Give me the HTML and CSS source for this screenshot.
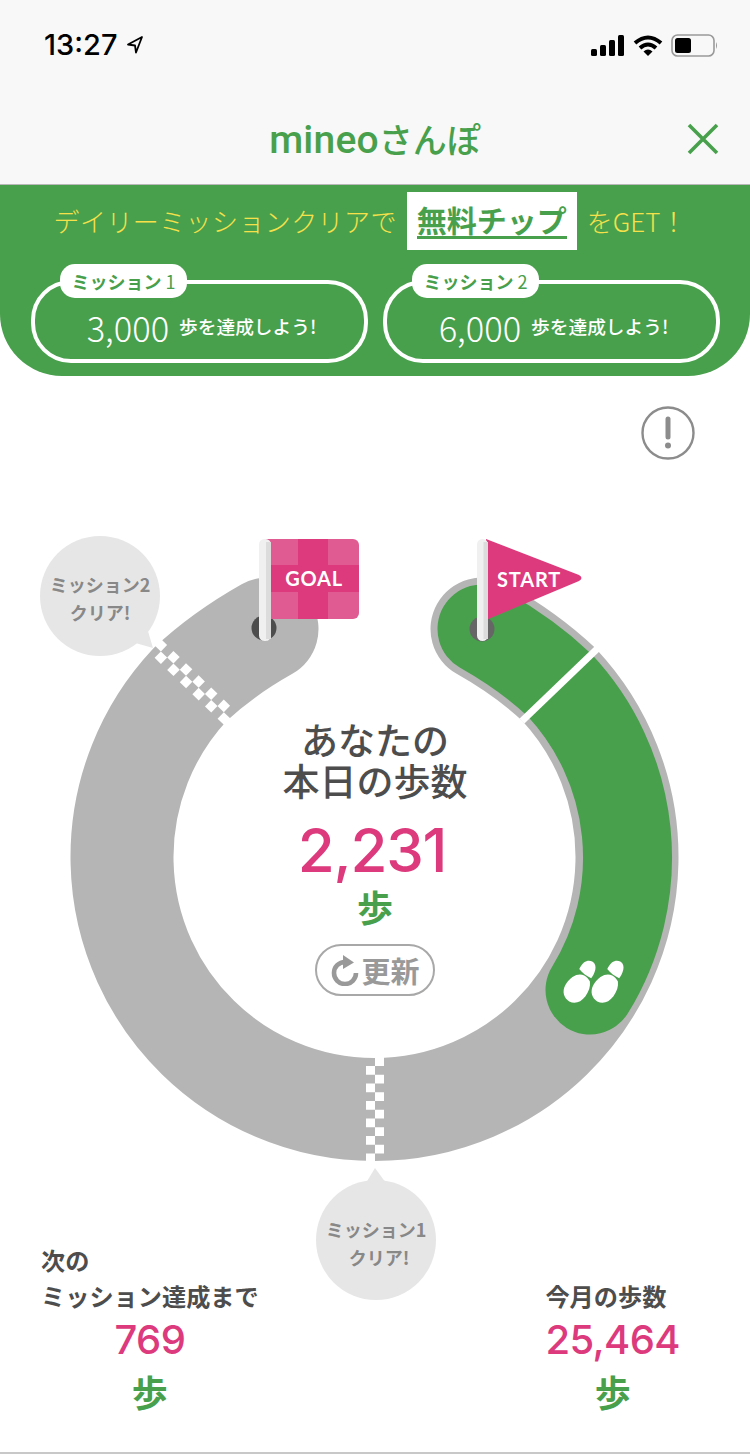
FILE: index.html
```html
<!DOCTYPE html>
<html lang="ja">
<head>
<meta charset="utf-8">
<title>mineoさんぽ</title>
<link rel="stylesheet" href="styles.css">
</head>
<body>
<div class="page">
  <header class="top">
    <div class="status">
      <div class="status-time">
        <span class="time">13:27</span>
        <svg class="arrow" width="18" height="20" viewBox="0 0 18 20"><path d="M16 2 L2 9.5 L9 10.5 L10 17.5 Z" fill="none" stroke="#000" stroke-width="1.8" stroke-linejoin="round"/></svg>
      </div>
      <div class="status-icons">
        <svg width="34" height="22" viewBox="0 0 34 22"><rect x="0" y="14" width="6" height="7" rx="1.5"/><rect x="9" y="10" width="6" height="11" rx="1.5"/><rect x="18" y="5" width="6" height="16" rx="1.5"/><rect x="27" y="0" width="6" height="21" rx="1.5"/></svg>
        <svg width="30" height="22" viewBox="0 0 30 22"><path d="M2 8 Q15 -3 28 8" fill="none" stroke="#000" stroke-width="4"/><path d="M7 13 Q15 6 23 13" fill="none" stroke="#000" stroke-width="4"/><path d="M10.5 16.5 Q15 12.5 19.5 16.5 L15 21 Z"/></svg>
        <svg width="47" height="23" viewBox="0 0 47 23"><rect x="1" y="1" width="42" height="21" rx="5.5" fill="none" stroke="#999" stroke-width="1.6"/><rect x="4" y="4" width="16" height="15" rx="2.5"/><path d="M45 8 Q47 11.5 45 15 Z" fill="#999"/></svg>
      </div>
    </div>
    <div class="nav">
      <h1 class="title"><span class="title-latin">mineo</span>さんぽ</h1>
      <svg class="close" width="32" height="32" viewBox="0 0 32 32"><path d="M2 2 L30 30 M30 2 L2 30" stroke="#48a04c" stroke-width="3.6" fill="none"/></svg>
    </div>
  </header>

  <section class="banner">
    <div class="headline">
      <span class="headline-lead">デイリーミッションクリアで</span>
      <a class="chip-box"><span class="chip-text">無料チップ</span></a>
      <span>をGET！</span>
    </div>
    <div class="missions">
      <div class="mission">
        <span class="mission-tag">ミッション<span class="tag-num">1</span></span>
        <span class="mission-steps">3,000</span>
        <span class="mission-copy">歩を達成しよう!</span>
      </div>
      <div class="mission">
        <span class="mission-tag">ミッション<span class="tag-num">2</span></span>
        <span class="mission-steps">6,000</span>
        <span class="mission-copy">歩を達成しよう!</span>
      </div>
    </div>
  </section>

  <div class="info-row">
    <svg width="54" height="54" viewBox="0 0 54 54"><circle cx="27" cy="27" r="25.5" fill="#fff" stroke="#8c8c8c" stroke-width="2.4"/><path d="M27 13 V31" stroke="#8c8c8c" stroke-width="5" stroke-linecap="round"/><circle cx="27" cy="39.5" r="3" fill="#8c8c8c"/></svg>
  </div>

  <main class="course">
    <svg class="course-map" width="750" height="850" viewBox="0 460 750 850">
      <defs>
        <g id="checker" fill="#fff">
          <rect x="375" y="1055" width="9" height="11"/>
          <rect x="366" y="1066" width="9" height="8.75"/>
          <rect x="375" y="1074.75" width="9" height="8.75"/>
          <rect x="366" y="1083.5" width="9" height="8.75"/>
          <rect x="375" y="1092.25" width="9" height="8.75"/>
          <rect x="366" y="1101" width="9" height="8.75"/>
          <rect x="375" y="1109.75" width="9" height="8.75"/>
          <rect x="366" y="1118.5" width="9" height="8.75"/>
          <rect x="375" y="1127.25" width="9" height="8.75"/>
          <rect x="366" y="1136" width="9" height="8.75"/>
          <rect x="375" y="1144.75" width="9" height="8.75"/>
          <rect x="366" y="1153.5" width="9" height="10"/>
        </g>
        <g id="shoe" fill="#fff">
          <path d="M-11.5 3 C-11.5 -8 -6 -14 0 -14.5 C3 -14.500 6 -13.500 8 -12 C11 -8 12 -3 11.500 3 C10.500 11 6 15.500 0 15.500 C-6 15.500 -11.500 11 -11.500 3 Z"/>
          <path d="M-7.500 -17.500 C-8.500 -27 -4 -30.500 0 -30.500 C4.500 -30.500 8.500 -26 7.500 -15.500 C3 -15 -3 -15.500 -7.500 -17.500 Z"/>
        </g>
      </defs>

      <path class="track" d="M482 629 C505 642 535 662 559.2 684.8 A252.5 252.5 0 1 1 189.8 684.8 C214 662 244 642 267 629"/>
      <path class="track-done" d="M482 629 C505 642 535 662 559.2 684.8 A252.5 252.5 0 0 1 590 990"/>
      <path class="divider" d="M597 649 L522 721"/>
      <use href="#checker"/>
      <use href="#checker" transform="rotate(134 374.5 857)"/>

      <g transform="translate(577 988) rotate(30)"><use href="#shoe"/></g>
      <g transform="translate(605 988) rotate(30)"><use href="#shoe"/></g>

      <circle cx="264" cy="628" r="12.5" fill="#4d4d4d"/>
      <circle cx="482" cy="629" r="12.5" fill="#666"/>

      <rect x="262" y="539" width="97" height="80" rx="6" fill="#e05b92"/>
      <rect x="298" y="539" width="30" height="80" fill="#dc3a7c"/>
      <rect x="271" y="565" width="88" height="27" fill="#dc3a7c"/>
      <text class="flag-label" x="314" y="586">GOAL</text>
      <rect x="259" y="539" width="12" height="102" rx="5.5" fill="#f0f0f0"/>
      <rect x="266" y="542" width="5" height="97" fill="#dcdcdc"/>

      <path d="M486 539 L579 575 Q584 578 579 581 L486 620 Z" fill="#dc3a7c"/>
      <text class="flag-label" x="529" y="587">START</text>
      <rect x="477" y="539" width="11" height="102" rx="5.5" fill="#f0f0f0"/>
      <rect x="483.500" y="542" width="4.500" height="97" fill="#dcdcdc"/>

      <circle cx="100" cy="596" r="60" fill="#e6e6e6"/>
      <path d="M147 628 L153 648 L132 642 Z" fill="#e6e6e6"/>
      <text class="bubble-label" x="100" y="592">ミッション2</text>
      <text class="bubble-label" x="100" y="620">クリア!</text>

      <circle cx="376" cy="1240" r="60" fill="#e6e6e6"/>
      <path d="M375 1168 L366 1183 L386 1183 Z" fill="#e6e6e6"/>
      <text class="bubble-label" x="376" y="1237">ミッション1</text>
      <text class="bubble-label" x="379" y="1265">クリア!</text>
    </svg>

    <div class="today">
      <h2 class="today-title">あなたの<br>本日の歩数</h2>
      <div class="today-count">2,231</div>
      <div class="today-unit">歩</div>
      <button class="refresh" type="button">
        <svg width="30" height="32" viewBox="0 0 30 32"><path d="M15 8 A11 11 0 1 0 26 19" fill="none" stroke="#999" stroke-width="4.600"/><path d="M13 1 L24 8.500 L13 15 Z" fill="#999"/></svg>
        <span>更新</span>
      </button>
    </div>
  </main>

  <footer class="stats">
    <div class="stat">
      <div class="stat-label">次の<br>ミッション達成まで</div>
      <div class="stat-value">769</div>
      <div class="stat-unit">歩</div>
    </div>
    <div class="stat">
      <div class="stat-label">今月の歩数</div>
      <div class="stat-value">25,464</div>
      <div class="stat-unit">歩</div>
    </div>
  </footer>
</div>
</body>
</html>
```

FILE: styles.css
```css
* { box-sizing: border-box; }
html, body { margin: 0; padding: 0; background: #fff; }
body { font-family: "Noto Sans CJK JP", "Liberation Sans", sans-serif; }
.page { width: 750px; height: 1454px; overflow: hidden; display: flex; flex-direction: column; border-bottom: 2px solid #c8c8c8; }

.top { height: 185px; background: #f8f8f8; border-bottom: 1px solid #b8b8b8; flex: none; }
.status { height: 90px; padding: 30px 32px 0 44px; display: flex; justify-content: space-between; align-items: flex-start; }
.status-time { display: flex; align-items: center; gap: 9px; }
.time { font-family: Inter, Roboto, sans-serif; font-size: 29px; font-weight: 500; line-height: 30px; color: #000; }
.status-icons { display: flex; gap: 8px; align-items: center; padding-top: 4px; }

.nav { height: 94px; display: flex; align-items: center; justify-content: center; position: relative; padding-top: 4px; }
.title { margin: 0; font-size: 34px; font-weight: 500; color: #48a04c; line-height: 44px; }
.title-latin { font-family: Roboto, "Liberation Sans", sans-serif; font-size: 39px; font-weight: 500; letter-spacing: 0.2px; }
.close { position: absolute; right: 31px; top: 33px; }

.banner { height: 191px; flex: none; background: #48a04c; border-radius: 0 0 62px 62px; padding: 7px 30px 0 31px; }
.headline { height: 58px; display: flex; justify-content: center; align-items: center; gap: 10px; color: #f6e14a; font-size: 26px; line-height: 30px; font-weight: 300; padding-right: 11px; }
.headline-lead { letter-spacing: 0.4px; }
.chip-box { background: #fff; height: 58px; width: 170px; display: flex; align-items: center; justify-content: center; }
.chip-text { color: #48a04c; font-weight: 700; font-size: 30px; line-height: 38px; border-bottom: 3px solid #48a04c; display: block; height: 39px; margin-top: -3px; }
.missions { display: grid; grid-template-columns: 337px 337px; column-gap: 15px; margin-top: 30px; }
.mission { position: relative; height: 83px; border: 4px solid #fff; border-radius: 40px; color: #fff; display: flex; align-items: center; justify-content: center; gap: 10px; padding: 11px 0 0 4px; }
.mission-tag { position: absolute; left: 25px; top: -20px; width: 127px; height: 34px; border-radius: 15px; background: #fff; color: #48a04c; font-size: 18px; font-weight: 700; line-height: 34px; text-align: center; white-space: nowrap; }
.tag-num { font-weight: 400; margin-left: 4px; }
.mission-steps { font-family: "Noto Sans CJK JP", sans-serif; font-size: 34.500px; font-weight: 300; line-height: 40px; }
.mission-copy { font-size: 18.700px; font-weight: 500; line-height: 24px; margin-top: -3px; }

.info-row { height: 84px; flex: none; display: flex; justify-content: flex-end; align-items: flex-start; padding: 30px 55px 0 0; }

.course { position: relative; height: 782px; flex: none; }
.course-map { position: absolute; left: 0; top: 0; overflow: visible; }
.track { fill: none; stroke: #b5b5b5; stroke-width: 103; stroke-linecap: round; }
.track-done { fill: none; stroke: #48a04c; stroke-width: 89; stroke-linecap: round; }
.divider { fill: none; stroke: #fff; stroke-width: 7; }
.flag-label { font-family: Lato, "Open Sans", sans-serif; font-weight: 700; font-size: 20px; fill: #fff; text-anchor: middle; letter-spacing: 0.8px; }
.bubble-label { font-family: "Noto Sans CJK JP", sans-serif; font-weight: 700; font-size: 18px; fill: #888; text-anchor: middle; }

.today { position: absolute; left: 175px; width: 400px; top: 259px; display: flex; flex-direction: column; align-items: center; }
.today-title { margin: 0; font-size: 37px; line-height: 41px; font-weight: 500; color: #4d4d4d; text-align: center; }
.today-count { font-family: Inter, "Liberation Sans", sans-serif; font-size: 60px; line-height: 70px; font-weight: 500; color: #dc3a7c; margin-top: 14px; margin-right: 6px; letter-spacing: -1.200px; }
.today-unit { font-size: 36px; line-height: 40px; font-weight: 700; color: #48a04c; margin-top: 1px; }
.refresh { margin-top: 18px; width: 120px; height: 52px; border: 2px solid #a8a8a8; border-radius: 26px; background: #fff; display: flex; align-items: center; justify-content: center; gap: 1px; padding: 0; font-family: inherit; font-size: 29px; font-weight: 700; color: #999; }

.stats { flex: none; display: flex; justify-content: space-between; align-items: flex-end; padding: 0 70px 0 41px; }
.stat { display: flex; flex-direction: column; position: relative; }
.stat-label { font-size: 24.200px; line-height: 36px; font-weight: 700; color: #4d4d4d; white-space: nowrap; }
.stat-value { font-family: Inter, "Liberation Sans", sans-serif; font-size: 40px; line-height: 48px; font-weight: 500; color: #dc3a7c; text-align: center; margin-top: 2px; letter-spacing: -0.600px; }
.stat-unit { font-size: 36px; line-height: 50px; font-weight: 700; color: #48a04c; text-align: center; margin-top: 2px; }
```
